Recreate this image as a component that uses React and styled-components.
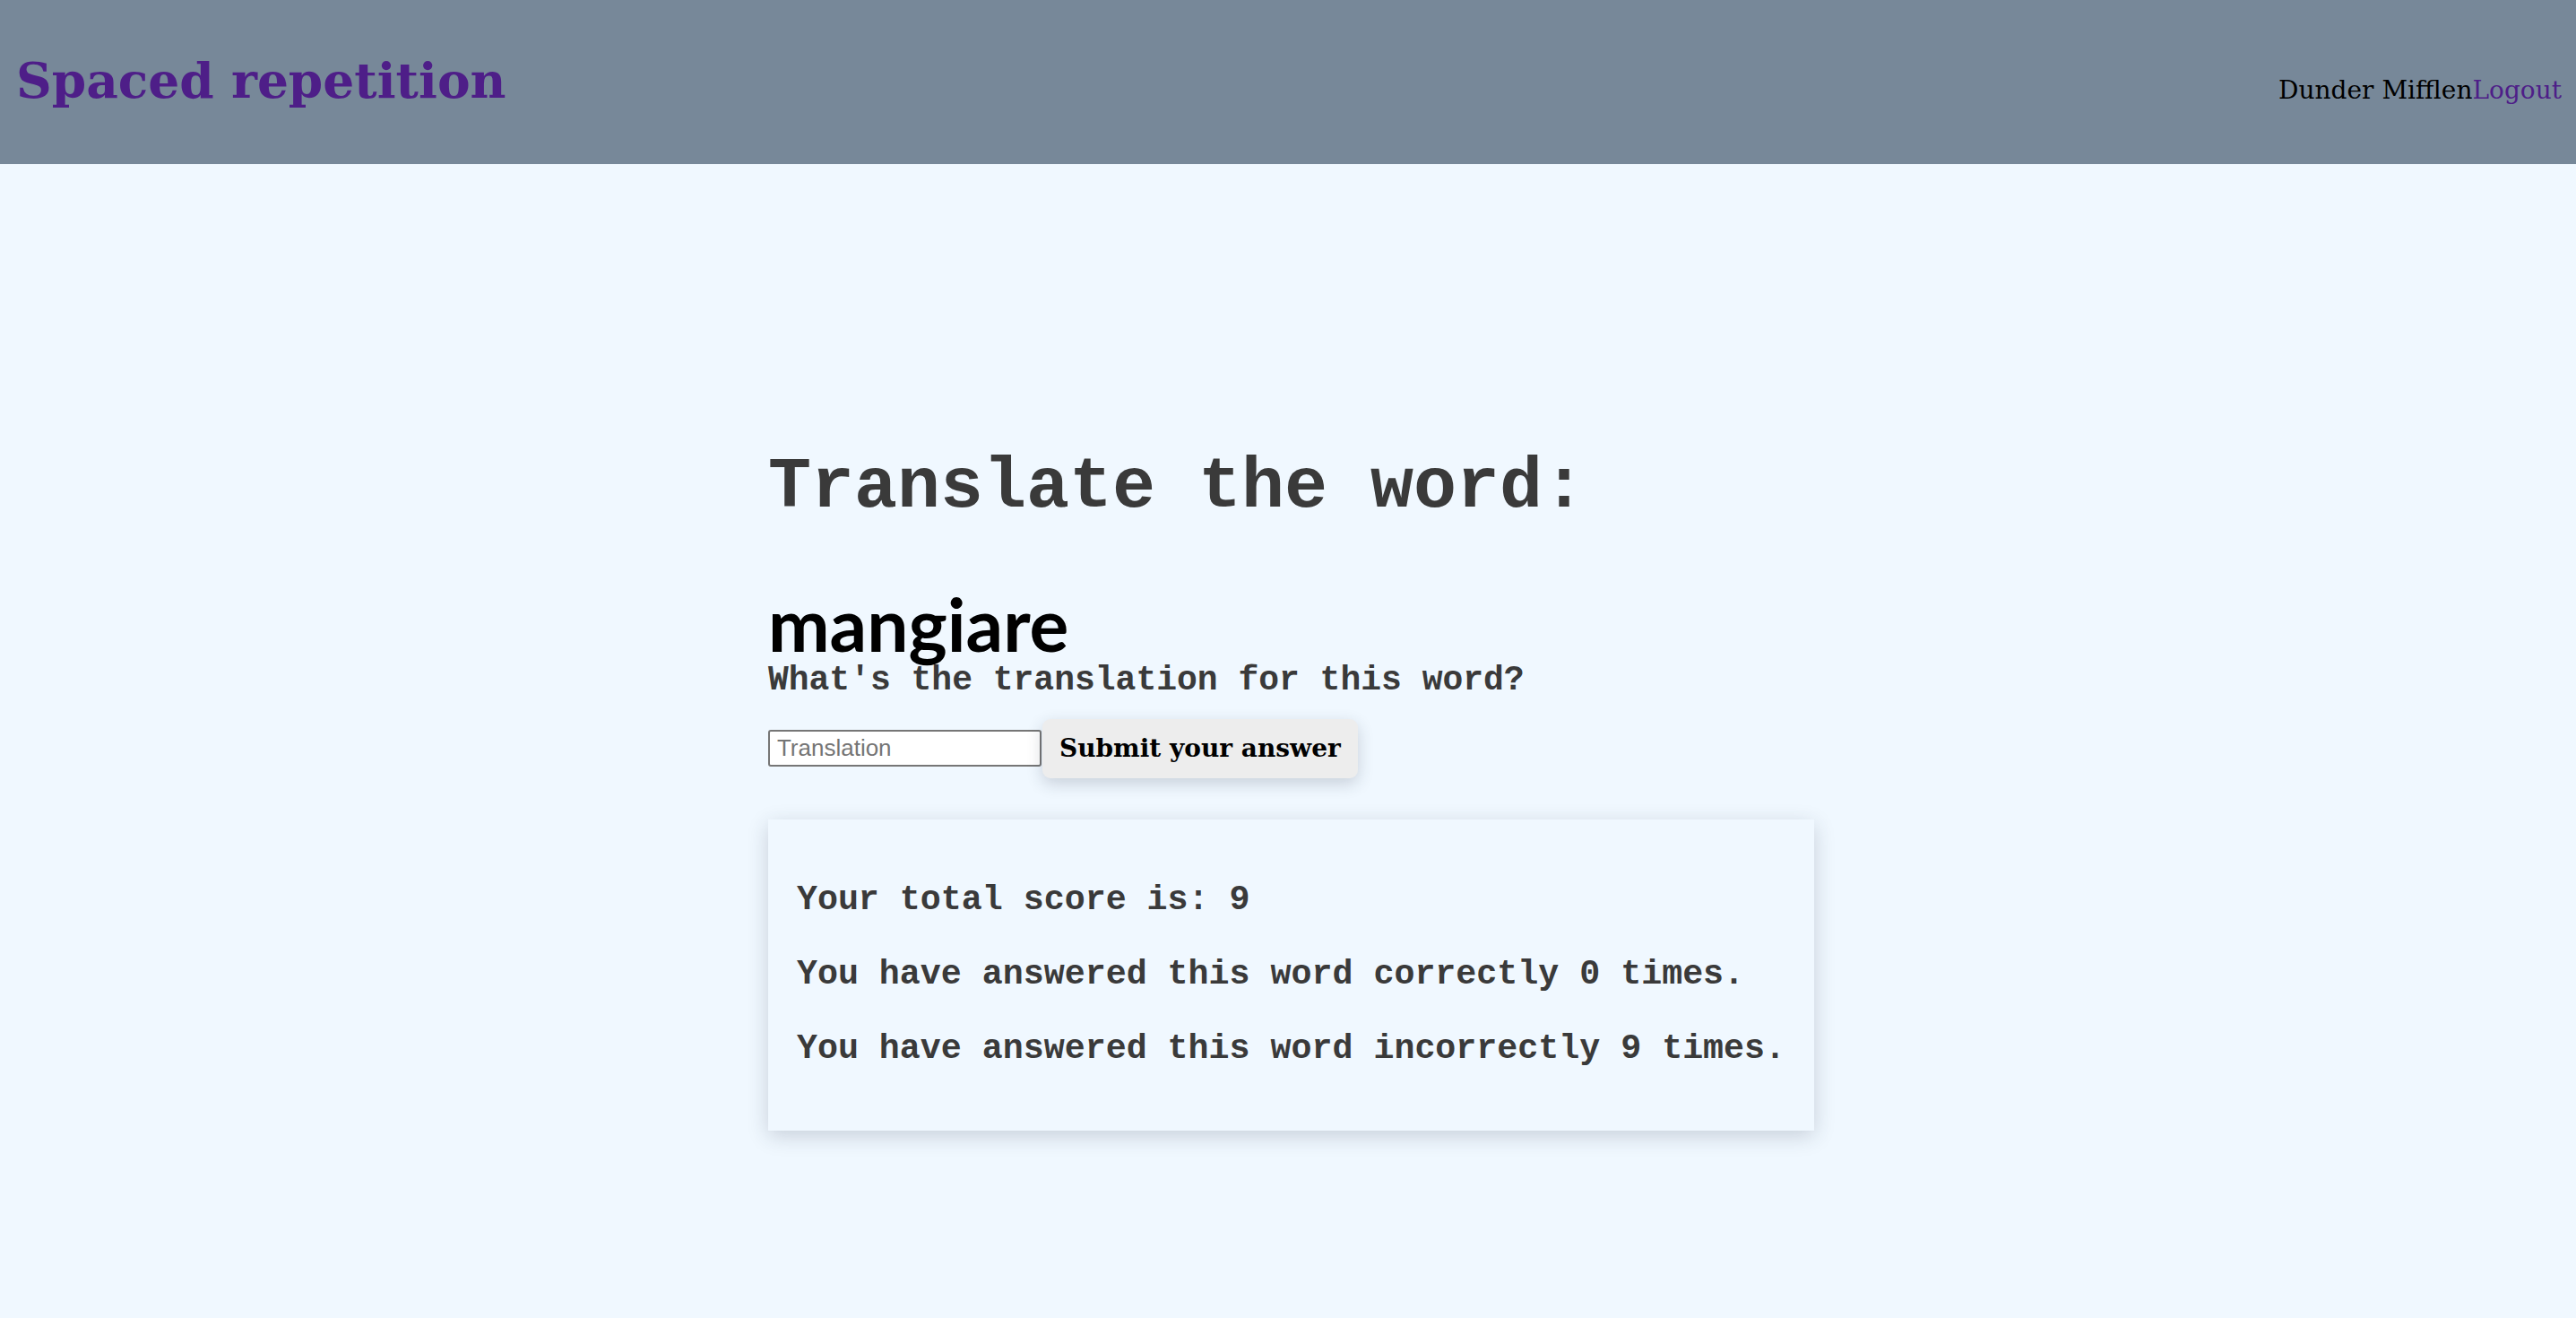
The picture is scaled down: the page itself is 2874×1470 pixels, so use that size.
import styled, { createGlobalStyle } from "styled-components";
import { useState } from "react";

const GlobalStyle = createGlobalStyle`
  html, body {
    margin: 0;
    padding: 0;
    background: #f0f8ff;
  }
  body {
    font-family: "DejaVu Serif", Georgia, serif;
  }
`;

const StyledHeader = styled.header`
  height: 183px;
  background: #778899;
  display: flex;
  justify-content: space-between;
  align-items: center;
  padding: 0 16px 0 18px;
  box-sizing: border-box;

  .title {
    margin: 0;
    font-family: "DejaVu Serif", Georgia, serif;
    font-weight: bold;
    font-size: 55px;
    color: #4e1e88;
    margin-top: -4px;
  }

  .nav {
    font-family: "DejaVu Serif", Georgia, serif;
    font-size: 28px;
    color: #000;
    margin-top: 18px;
  }

  .nav a {
    color: #4e1e88;
    text-decoration: none;
  }
`;

const Main = styled.main`
  width: fit-content;
  margin: 0 auto;
  padding: 313px 0 120px 7px;
  color: #3a3a3a;
  font-family: "Liberation Mono", "Courier New", monospace;
`;

const Heading = styled.h2`
  margin: 0 0 62px;
  font-size: 80px;
  font-weight: bold;
  line-height: 1.2;
`;

const Word = styled.h3`
  margin: 0;
  font-family: Lato, "DejaVu Sans", sans-serif;
  font-weight: bold;
  font-size: 82px;
  line-height: 1;
  color: #000;
`;

const Question = styled.p`
  margin: 2px 0 0;
  font-size: 38px;
  font-weight: bold;
  line-height: 1.1;
`;

const AnswerForm = styled.form`
  display: flex;
  align-items: center;
  margin-top: 22px;
`;

const Input = styled.input`
  width: 305px;
  height: 41px;
  box-sizing: border-box;
  border: 2px solid #767676;
  border-radius: 3px;
  background: #fff;
  padding: 0 8px;
  font-family: "Liberation Sans", Arial, sans-serif;
  font-size: 26px;
  color: #222;
  &::placeholder {
    color: #757575;
  }
`;

const SubmitButton = styled.button`
  height: 66px;
  padding: 0 19px;
  margin-left: 1px;
  border: none;
  border-radius: 9px;
  background: #ededed;
  box-shadow: 0 6px 18px rgba(40, 50, 70, 0.2);
  font-family: "DejaVu Serif", Georgia, serif;
  font-weight: bold;
  font-size: 28px;
  color: #000;
  cursor: pointer;
`;

const ScoreCard = styled.section`
  margin-top: 46px;
  width: fit-content;
  padding: 30px 32px;
  background: #f0f8ff;
  box-shadow: 0 6px 22px rgba(40, 50, 70, 0.2);

  p {
    margin: 38px 0;
    font-size: 38.3px;
    font-weight: bold;
    line-height: 1.18;
  }
`;

const App = () => {
  const [guess, setGuess] = useState("");
  return (
    <>
      <GlobalStyle />
      <StyledHeader>
        <h1 className="title">Spaced repetition</h1>
        <div className="nav">
          <span>Dunder Mifflen</span>
          <a href="#logout">Logout</a>
        </div>
      </StyledHeader>
      <Main>
        <Heading>Translate the word:</Heading>
        <Word>mangiare</Word>
        <Question>What's the translation for this word?</Question>
        <AnswerForm onSubmit={(e) => e.preventDefault()}>
          <Input
            placeholder="Translation"
            value={guess}
            onChange={(e) => setGuess(e.target.value)}
          />
          <SubmitButton type="submit">Submit your answer</SubmitButton>
        </AnswerForm>
        <ScoreCard>
          <p>Your total score is: 9</p>
          <p>You have answered this word correctly 0 times.</p>
          <p>You have answered this word incorrectly 9 times.</p>
        </ScoreCard>
      </Main>
    </>
  );
};

export default App;
